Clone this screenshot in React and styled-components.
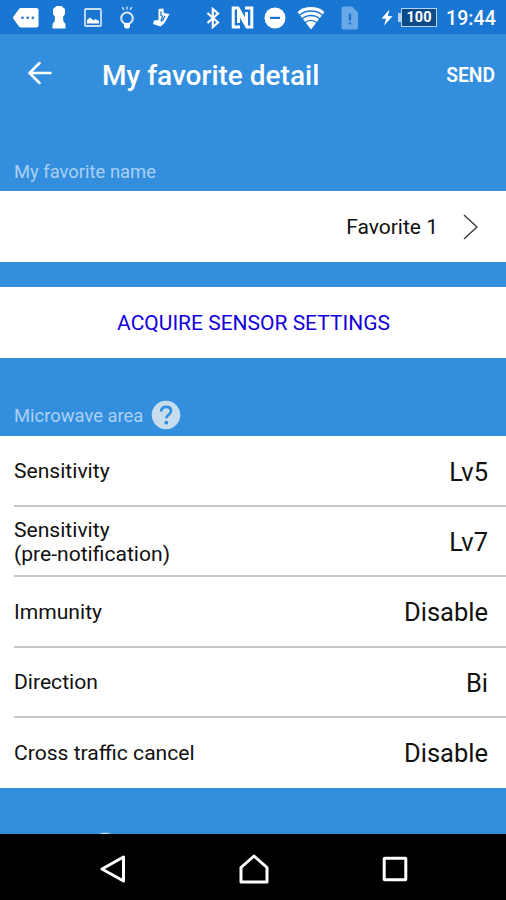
import styled, { createGlobalStyle } from "styled-components";

const settings = [
  { label: "Sensitivity", value: "Lv5" },
  { label: "Sensitivity\n(pre-notification)", value: "Lv7" },
  { label: "Immunity", value: "Disable" },
  { label: "Direction", value: "Bi" },
  { label: "Cross traffic cancel", value: "Disable" },
];

export default function App() {
  return (
    <>
      <GlobalStyle />
      <Screen>
        <StatusBar />
        <AppBar>
          <BackButton aria-label="Back">
            <svg width="24" height="24" viewBox="0 0 24 24" fill="none" stroke="#fff" strokeWidth="2.5" strokeLinecap="round" strokeLinejoin="round">
              <path d="M22.5 12H2M11.5 2 1.5 12l10 10" />
            </svg>
          </BackButton>
          <Title>My favorite detail</Title>
          <SendButton>SEND</SendButton>
        </AppBar>
        <Content>
          <SectionHeader $height={75} $bottom={8}>
            My favorite name
          </SectionHeader>
          <NameRow>
            <span>Favorite 1</span>
            <svg width="16" height="26" viewBox="0 0 16 26" fill="none" stroke="#333" strokeWidth="1.3">
              <path d="M1 1 14 13 1 25" />
            </svg>
          </NameRow>
          <AcquireButton>ACQUIRE SENSOR SETTINGS</AcquireButton>
          <SectionHeader $height={78} $bottom={9}>
            Microwave area
            <HelpIcon />
          </SectionHeader>
          <List>
            {settings.map((item) => (
              <Row key={item.label}>
                <Label>{item.label}</Label>
                <Value>{item.value}</Value>
              </Row>
            ))}
          </List>
          <NextHeader>
            <HelpIcon />
          </NextHeader>
        </Content>
        <NavBar />
      </Screen>
    </>
  );
}

const StatusBar = () => (
  <Status>
    <StatusIcon width="26" height="20" viewBox="0 0 26 20" $gap={13}>
      <path d="M8 0h15.500a2 2 0 0 1 2 2v15.500a2 2 0 0 1-2 2H8a2.500 2.500 0 0 1-2-1L0.500 11a2 2 0 0 1 0-2.500L6 1a2.500 2.500 0 0 1 2-1z" />
      <g fill="#1976d2">
        <circle cx="9.500" cy="9.700" r="1.300" />
        <circle cx="14.700" cy="9.700" r="1.300" />
        <circle cx="19.900" cy="9.700" r="1.300" />
      </g>
    </StatusIcon>
    <StatusIcon width="14" height="23" viewBox="0 0 14 23" $gap={13}>
      <path d="M4.500 0h5L13 3v5l-2 3 .5 5q2 .5 2 3v3.500H.500V19q0-2.500 2-3L3 11 1 8V3z" />
    </StatusIcon>
    <StatusIcon width="18" height="19" viewBox="0 0 18 19" $gap={18}>
      <rect x="1" y="1" width="16" height="17" rx="1" fill="none" stroke="#c9e0f6" strokeWidth="1.800" />
      <path d="M3 15.500V12l3-2.500 3.500 3 2-1.500 3.500 2v2.500z" />
    </StatusIcon>
    <StatusIcon width="16" height="23" viewBox="0 0 16 23" $gap={17}>
      <g fill="none" stroke="#d9eafa" strokeWidth="1.700">
        <circle cx="8" cy="12.300" r="5.800" strokeWidth="2" />
        <path d="M8 .5v3M3.300 1.200l1.600 2.600M12.700 1.200l-1.600 2.600" strokeWidth="1.300" />
      </g>
      <path d="M5 17h6v4l-1.500 1.500h-3L5 21z" />
    </StatusIcon>
    <StatusIcon width="18" height="19" viewBox="0 0 18 19" $gap={17}>
      <path d="M6.500 1 11.500.5l.3 4.500L17.500 6 12.500 15l-4 3.500L1 16l1-3.500 4.500-.500z" />
      <path d="M9 3.500v4.500M10.500 7.500l-1.500 6M13 8l-2.500 5" fill="none" stroke="#1976d2" strokeWidth="1.300" />
    </StatusIcon>
    <StatusIcon width="14" height="22" viewBox="0 0 14 22" $gap={36}>
      <path d="M1.500 6 12 15.500 6.800 20V2L12 6.500 1.500 16" fill="none" stroke="#fff" strokeWidth="2.200" />
    </StatusIcon>
    <StatusIcon width="23" height="23" viewBox="0 0 23 23" $gap={11}>
      <path d="M9 21H2.200V2H7l8.500 15V6M14 2h6.800v19H16L7.500 6v11" fill="none" stroke="#fff" strokeWidth="3" />
    </StatusIcon>
    <StatusIcon width="22" height="22" viewBox="0 0 22 22" $gap={10}>
      <circle cx="11" cy="11" r="10.500" />
      <path d="M6 9.800h10v2.200H6z" fill="#1976d2" />
    </StatusIcon>
    <StatusIcon width="28" height="24" viewBox="0 0 28 24" $gap={11}>
      <path d="M14 1C8.700 1 4 2.800.500 6L14 23.500 27.500 6C24 2.800 19.300 1 14 1z" />
      <g fill="none" stroke="#1976d2" strokeWidth="1.300">
        <path d="M2.500 9.200C5.500 6.500 9.500 5 14 5s8.500 1.500 11.500 4.200" />
        <path d="M5 13c2.500-2.300 5.500-3.500 9-3.500s6.500 1.200 9 3.500" />
        <path d="M8 16.800c1.800-1.700 3.700-2.500 6-2.500s4.200.8 6 2.500" />
      </g>
    </StatusIcon>
    <StatusIcon width="18" height="24" viewBox="0 0 18 24" $gap={16}>
      <path d="M2.500.500h8.500l6 6v15a2 2 0 0 1-2 2H2.500a2 2 0 0 1-2-2v-19a2 2 0 0 1 2-2z" fill="#69a8e6" />
      <path d="M7.800 7.500h2.300v7H7.800zM7.800 16.200h2.300v2.300H7.800z" fill="#1976d2" />
    </StatusIcon>
    <StatusIcon width="12" height="17" viewBox="0 0 12 17" $gap={22}>
      <path d="M8.500.500.500 9.500l4.500.300L3 16.500l8.500-9.300-4.700-.200z" />
    </StatusIcon>
    <Battery>
      <BatteryTip />
      <BatteryLevel>100</BatteryLevel>
    </Battery>
    <Clock>19:44</Clock>
  </Status>
);

const HelpIcon = () => (
  <svg width="30" height="30" viewBox="0 0 30 30">
    <circle cx="15" cy="15" r="14.300" fill="#c7dcec" />
    <path d="M10.200 11.500c.2-3 2.200-4.600 5-4.600 2.900 0 4.800 1.600 4.800 4.100 0 3.600-4.600 3.900-4.600 7.300" fill="none" stroke="#338fde" strokeWidth="2.700" />
    <circle cx="15.300" cy="22.700" r="1.900" fill="#338fde" />
  </svg>
);

const NavBar = () => (
  <Nav>
    <svg width="26" height="28" viewBox="0 0 26 28">
      <path d="M23.500 2v24L2 14z" />
    </svg>
    <svg width="30" height="30" viewBox="0 0 30 30">
      <path d="M2 28V13.500L15 2l13 11.500V28z" />
    </svg>
    <svg width="26" height="26" viewBox="0 0 26 26">
      <rect x="2.200" y="2.200" width="21.600" height="21.600" rx=".5" />
    </svg>
  </Nav>
);

const GlobalStyle = createGlobalStyle`
  body {
    margin: 0;
    font-family: Roboto, "Liberation Sans", sans-serif;
  }

  button {
    padding: 0;
    border: 0;
    background: none;
    font: inherit;
    color: inherit;
  }
`;

const Screen = styled.div`
  display: flex;
  flex-direction: column;
  width: 506px;
  height: 900px;
  overflow: hidden;
  background: #338fde;
`;

const Status = styled.div`
  display: flex;
  align-items: center;
  box-sizing: border-box;
  flex: none;
  height: 34px;
  padding-top: 1px;
  background: #1976d2;
  color: #fff;
`;

const StatusIcon = styled.svg`
  flex: none;
  margin-left: ${({ $gap }) => $gap}px;
  fill: #fff;
`;

const Battery = styled.div`
  display: flex;
  align-items: center;
  margin-left: 5px;
`;

const BatteryTip = styled.div`
  width: 3px;
  height: 9px;
  background: #b5d3f2;
`;

const BatteryLevel = styled.div`
  box-sizing: border-box;
  width: 36px;
  height: 19px;
  border: 1.5px solid #b5d3f2;
  background: #0d4a8c;
  font-size: 14.5px;
  font-weight: 700;
  line-height: 18px;
  text-align: center;
`;

const Clock = styled.span`
  margin-left: 9px;
  padding-top: 1px;
  font-size: 19.5px;
  font-weight: 500;
  letter-spacing: 0.1px;
`;

const AppBar = styled.header`
  display: flex;
  align-items: center;
  flex: none;
  height: 82px;
  padding: 0 11px 0 28px;
  color: #fff;
`;

const BackButton = styled.button`
  display: flex;
  margin: 0 50px 4px 0;
`;

const Title = styled.h1`
  flex: 1;
  margin: 0;
  font-size: 28px;
  font-weight: 500;
  white-space: nowrap;
`;

const SendButton = styled.button`
  font-size: 19.3px;
  font-weight: 600;
`;

const Content = styled.main`
  flex: 1;
  min-height: 0;
  overflow: hidden;
`;

const SectionHeader = styled.div`
  display: flex;
  align-items: flex-end;
  gap: 8px;
  box-sizing: border-box;
  height: ${({ $height }) => $height}px;
  padding: 0 14px ${({ $bottom }) => $bottom}px;
  font-size: 18.4px;
  line-height: 22px;
  color: #a9d0f2;

  svg {
    margin-bottom: -3px;
  }
`;

const NameRow = styled.div`
  display: flex;
  align-items: center;
  justify-content: flex-end;
  gap: 25px;
  height: 71px;
  padding-right: 27px;
  background: #fff;
  font-size: 21px;
  color: #111;
`;

const AcquireButton = styled.button`
  display: block;
  width: 100%;
  height: 71px;
  margin-top: 25px;
  padding-left: 1px;
  background: #fff;
  font-size: 21px;
  color: #1300dc;
`;

const List = styled.div`
  padding-left: 14px;
  background: #fff;
`;

const Row = styled.div`
  display: flex;
  align-items: center;
  justify-content: space-between;
  box-sizing: border-box;
  height: 70.25px;
  padding: 2px 18px 0 0;
  border-bottom: 2px solid #c9c9c9;
  color: #111;

  &:first-child {
    height: 71px;
  }

  &:last-child {
    padding-bottom: 2px;
    border-bottom: 0;
  }
`;

const Label = styled.span`
  font-size: 21.1px;
  line-height: 24.5px;
  white-space: pre-line;
`;

const Value = styled.span`
  font-size: 25.5px;
`;

const NextHeader = styled.div`
  padding: 43.5px 0 0 90px;
`;

const Nav = styled.nav`
  display: flex;
  align-items: center;
  justify-content: space-between;
  box-sizing: border-box;
  flex: none;
  height: 66px;
  padding: 4px 98px 0 100px;
  background: #000;

  svg {
    fill: none;
    stroke: #fff;
    stroke-width: 3;
    stroke-linejoin: round;
  }
`;
